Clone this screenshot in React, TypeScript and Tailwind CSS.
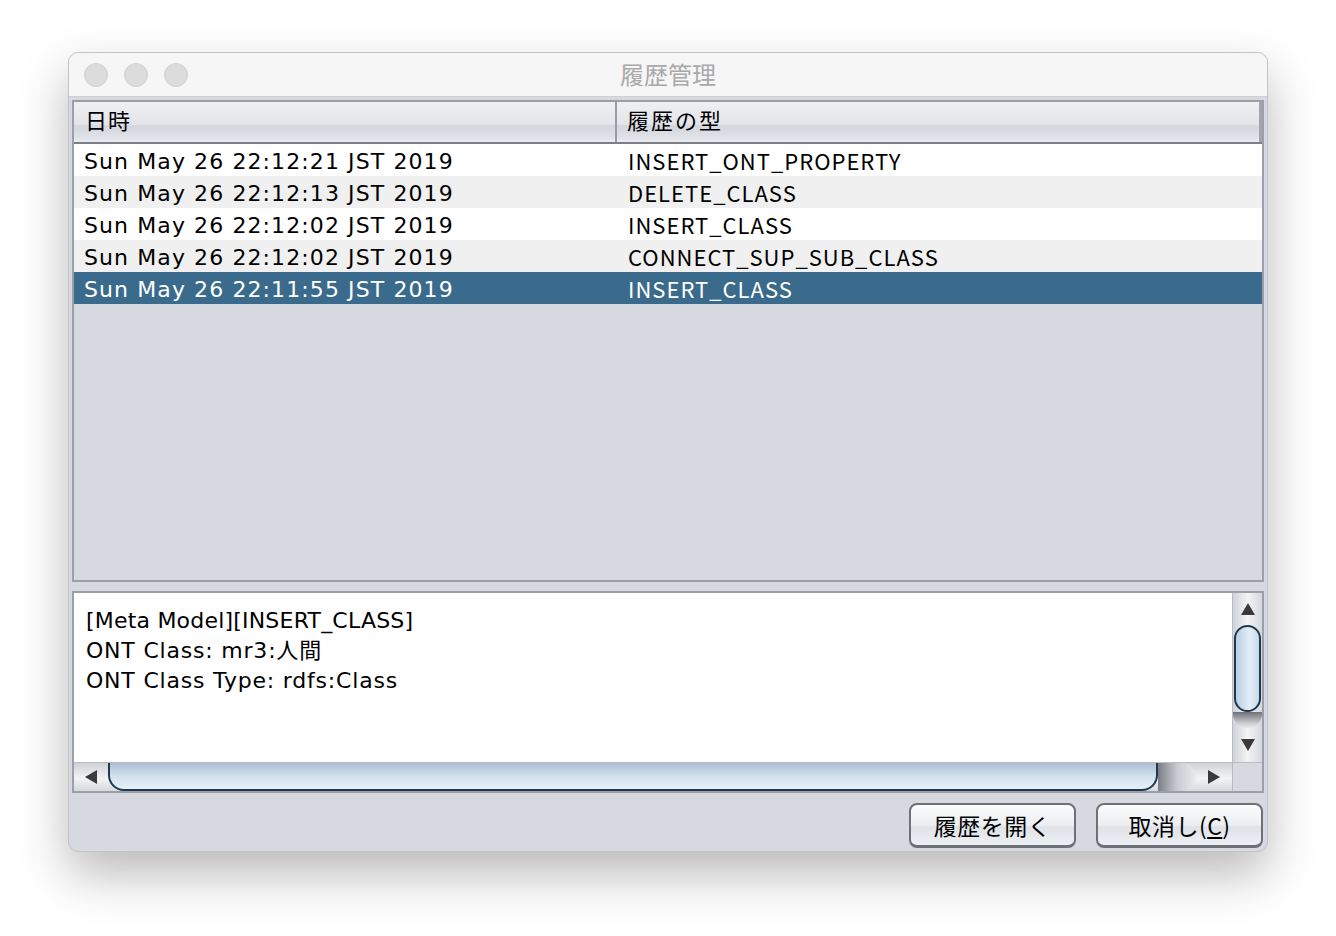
import React from 'react';

const rows = [
  { date: 'Sun May 26 22:12:21 JST 2019', type: 'INSERT_ONT_PROPERTY' },
  { date: 'Sun May 26 22:12:13 JST 2019', type: 'DELETE_CLASS' },
  { date: 'Sun May 26 22:12:02 JST 2019', type: 'INSERT_CLASS' },
  { date: 'Sun May 26 22:12:02 JST 2019', type: 'CONNECT_SUP_SUB_CLASS' },
  { date: 'Sun May 26 22:11:55 JST 2019', type: 'INSERT_CLASS' },
];

const latin = "font-['DejaVu_Sans','Noto_Sans_CJK_JP',sans-serif]";
const cjk = "font-['Noto_Sans_CJK_JP',sans-serif]";

const Arrow: React.FC<{ dir: 'up' | 'down' | 'left' | 'right' }> = ({ dir }) => {
  const pts = {
    up: '1,13 8,1 15,13',
    down: '1,1 8,13 15,1',
    left: '13,1 1,8 13,15',
    right: '1,1 13,8 1,15',
  }[dir];
  const size = dir === 'up' || dir === 'down' ? { w: 16, h: 14 } : { w: 14, h: 16 };
  return (
    <svg width={size.w} height={size.h} viewBox={`0 0 ${size.w} ${size.h}`}>
      <polygon points={pts} fill="#3a3a3a" />
    </svg>
  );
};

const App: React.FC = () => {
  return (
    <div className="w-[1336px] h-[936px] bg-white pl-[68px] pt-[52px]">
      <div className="w-[1200px] h-[800px] rounded-[10px] border border-[#c4c4c4] shadow-[0_22px_50px_rgba(0,0,0,0.28)] overflow-hidden flex flex-col bg-[#d6d9e0]">
        {/* title bar */}
        <div className="h-[44px] shrink-0 bg-[#f6f6f6] border-b border-[#d0d0d0] flex items-center relative">
          <div className="flex gap-[16px] pl-[15px]">
            <span className="w-[24px] h-[24px] rounded-full bg-[#dcdcdc] border border-[#d0d0d0]" />
            <span className="w-[24px] h-[24px] rounded-full bg-[#dcdcdc] border border-[#d0d0d0]" />
            <span className="w-[24px] h-[24px] rounded-full bg-[#dcdcdc] border border-[#d0d0d0]" />
          </div>
          <div className={`absolute inset-0 flex items-center justify-center pb-[2px] text-[24px] text-[#a9a9a9] ${cjk}`}>履歴管理</div>
        </div>

        <div className="flex-1 flex flex-col px-[3px] pt-[3px]">
          {/* table */}
          <div className="h-[482px] border-2 border-[#9c9ea8] bg-[#d6d9e0] flex flex-col">
            <div className="h-[42px] flex border-b-2 border-[#7c7f88] bg-[linear-gradient(#eef0f3,#e3e5ea_55%,#d3d6dd_60%,#dde0e6_85%,#eaecf1)]">
              <div className={`w-[543px] border-r-2 border-[#9a9ca4] flex items-center pl-[11px] pb-[5px] text-[22px] tracking-[1px] text-black ${cjk}`}>日時</div>
              <div className={`flex-1 flex items-center pl-[10px] pb-[5px] text-[22px] tracking-[2px] text-black border-r-[3px] border-[#a3a5ad] ${cjk}`}>履歴の型</div>
            </div>
            {rows.map((r, i) => {
              const sel = i === rows.length - 1;
              const bg = sel ? 'bg-[#3a6a8c] text-white' : i % 2 === 0 ? 'bg-white text-black' : 'bg-[#f0f0f0] text-black';
              return (
                <div key={i} className={`h-[32px] flex items-center ${bg}`}>
                  <div className={`w-[545px] pl-[10px] pt-[2px] text-[22px] tracking-[1.1px] ${latin}`}>{r.date}</div>
                  <div className={`flex-1 pl-[9px] text-[22px] tracking-[1px] ${cjk}`}>{r.type}</div>
                </div>
              );
            })}
          </div>

          {/* detail panel */}
          <div className="mt-[9px] h-[202px] border-2 border-[#9c9ea8] flex flex-col">
            <div className="flex-1 flex min-h-0">
              <div className={`flex-1 bg-white pl-[12px] pt-[13px] text-[22px] leading-[30px] text-black ${latin}`}>
                <div className="tracking-[0.2px]">[Meta Model][INSERT_CLASS]</div>
                <div className="tracking-[0.8px]">ONT Class: mr3:人間</div>
                <div className="tracking-[0.8px]">ONT Class Type: rdfs:Class</div>
              </div>
              {/* vertical scrollbar */}
              <div className="w-[30px] bg-[linear-gradient(90deg,#cfd2d8,#f3f4f6_50%,#d5d8dd)] border-l border-[#b9bcc3] flex flex-col">
                <div className="h-[32px] flex items-center justify-center"><Arrow dir="up" /></div>
                <div className="h-[87px] mx-[1px] rounded-[15px] border-2 border-[#1f3a4e] bg-[linear-gradient(90deg,#b8cfe2,#e3eef7_60%,#c6d9e8)]" />
                <div className="h-[16px] bg-[linear-gradient(#6d7076,#c9ccd1_70%,#e6e8eb)] rounded-b-[14px]" />
                <div className="flex-1" />
                <div className="h-[34px] flex items-center justify-center"><Arrow dir="down" /></div>
              </div>
            </div>
            {/* horizontal scrollbar */}
            <div className="h-[29px] flex border-t border-[#b9bcc3]">
              <div className="flex-1 flex bg-[linear-gradient(#cfd2d8,#f2f3f5_55%,#d6d9de)]">
                <div className="w-[34px] flex items-center justify-center"><Arrow dir="left" /></div>
                <div className="w-[1050px] rounded-[16px] rounded-t-none border-2 border-t-0 border-[#1f3a4e] bg-[linear-gradient(#a9bfd3,#d2e2ee_50%,#e6f1f8)]" />
                <div className="w-[38px] bg-[linear-gradient(90deg,#7a7d83,#c8cbd0_50%,#e8eaed)] rounded-r-[14px]" />
                <div className="flex-1 flex items-center justify-center"><Arrow dir="right" /></div>
              </div>
              <div className="w-[30px] bg-[#d6d9e0] border-l border-[#b9bcc3]" />
            </div>
          </div>

          {/* buttons */}
          <div className="mt-[10px] flex justify-end gap-[20px] pr-[1px]">
            <button className={`w-[167px] h-[45px] rounded-[8px] border-2 border-[#6e7077] border-b-[3px] bg-[linear-gradient(#fbfbfc,#eceef1_50%,#dfe2e7_55%,#eceff3)] text-[23px] tracking-[0.5px] text-black ${cjk}`}>履歴を開く</button>
            <button className={`w-[167px] h-[45px] rounded-[8px] border-2 border-[#6e7077] border-b-[3px] bg-[linear-gradient(#fbfbfc,#eceef1_50%,#dfe2e7_55%,#eceff3)] text-[23px] tracking-[0.5px] text-black ${cjk}`}>
              取消し(<span className="underline underline-offset-2">C</span>)
            </button>
          </div>
        </div>
      </div>
    </div>
  );
};

export default App;
